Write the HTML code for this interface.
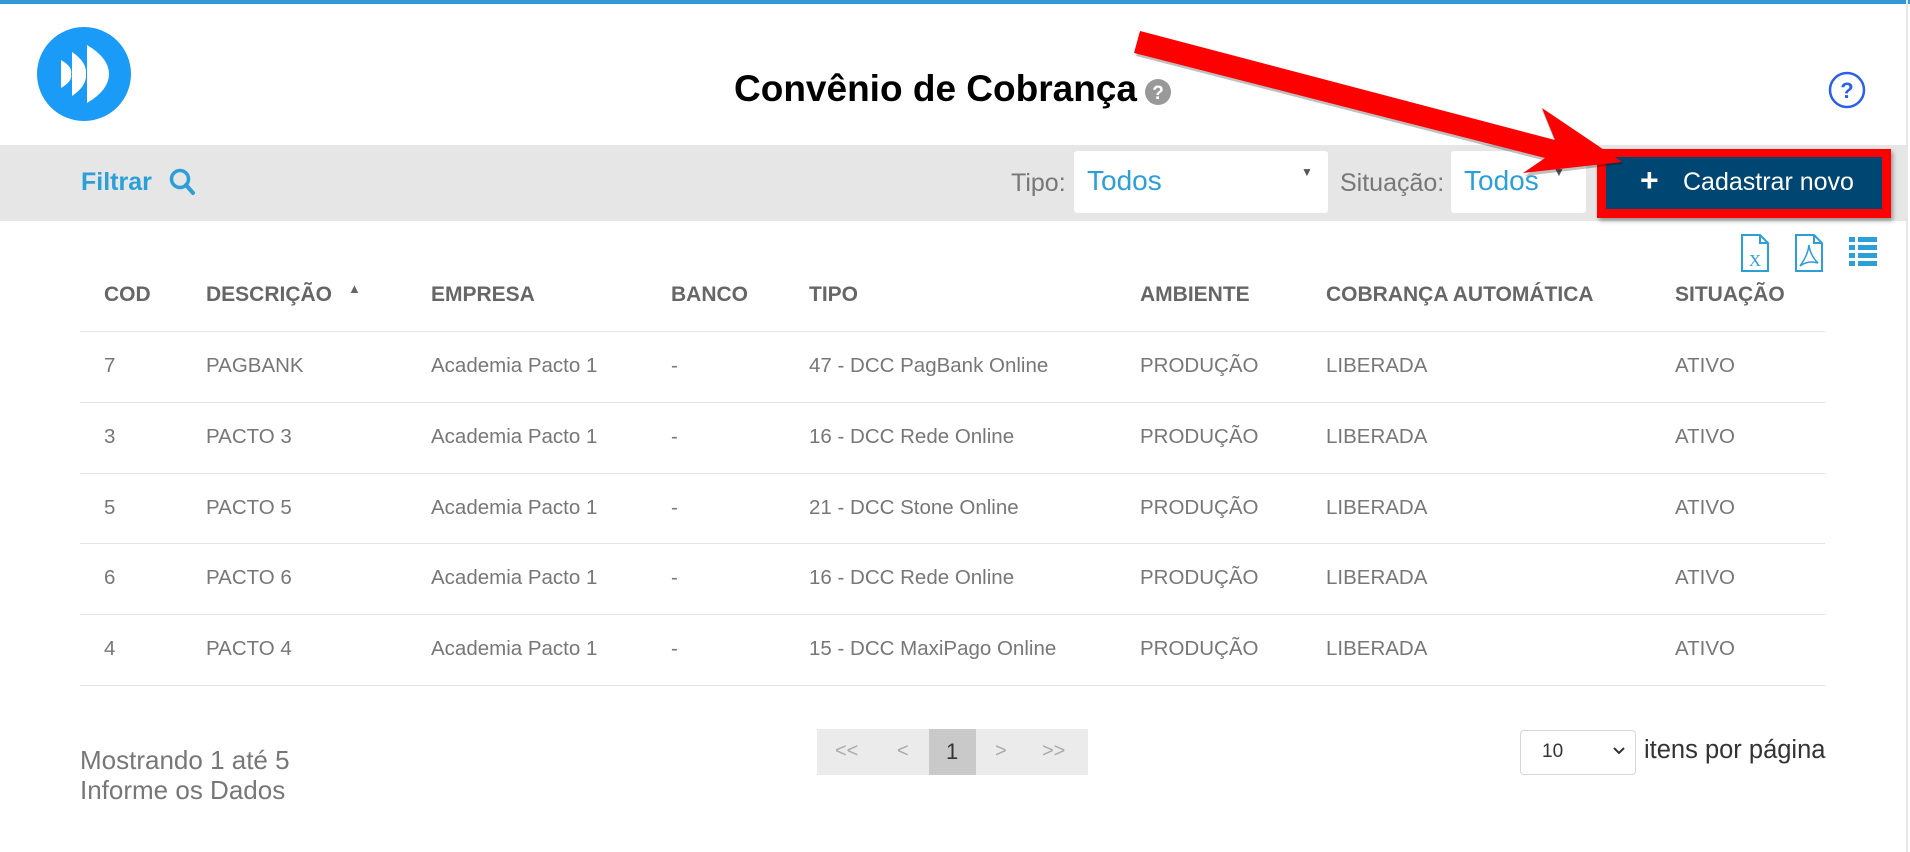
<!DOCTYPE html>
<html><head><meta charset="utf-8"><style>
*{box-sizing:border-box;margin:0;padding:0}
body{width:1910px;height:852px;overflow:hidden;background:#fff;font-family:"Liberation Sans",sans-serif;position:relative;color:#777}
.a{position:absolute;white-space:nowrap}
.th{position:absolute;top:283px;font-weight:bold;font-size:21px;color:#666;white-space:nowrap}
.td{position:absolute;font-size:20.5px;color:#777;white-space:nowrap}
.ln{position:absolute;left:80px;width:1745px;height:1px;background:#e2e6e8}
.r{position:absolute;left:0;width:1910px;height:30px}
</style></head><body>
<div class="a" style="left:0;top:0;width:1910px;height:4px;background:#3399d6"></div>
<div class="a" style="left:1906px;top:0;width:2px;height:852px;background:#e6e6e6"></div>
<svg class="a" style="left:0;top:0" width="140" height="140" viewBox="0 0 140 140">
<circle cx="84" cy="74" r="47" fill="#1a9bf8"/>
<path d="M61 60 Q73 67 71 74 Q73 81 61 88Z" fill="#fff"/>
<path d="M72 52 Q87 62 86 74 Q87 86 72 96Z" fill="#fff"/>
<path d="M87 45 Q109 58 109 74 Q109 90 87 103Z" fill="#fff"/>
</svg>
<div class="a" style="left:734px;top:68px;font-size:37px;font-weight:bold;color:#000">Convênio de Cobrança</div>
<svg class="a" style="left:1145px;top:79px" width="26" height="26" viewBox="0 0 26 26"><circle cx="13" cy="13" r="13" fill="#999"/><text x="13" y="20" text-anchor="middle" font-family="Liberation Sans" font-weight="bold" font-size="19" fill="#fff">?</text></svg>
<svg class="a" style="left:1828px;top:71px" width="38" height="38" viewBox="0 0 38 38"><circle cx="19" cy="19" r="17" fill="none" stroke="#2a5fe8" stroke-width="2.5"/><text x="19" y="27" text-anchor="middle" font-family="Liberation Sans" font-weight="bold" font-size="22" fill="#2a5fe8">?</text></svg>
<div class="a" style="left:0;top:145px;width:1906px;height:76px;background:#e6e6e6"></div>
<div class="a" style="left:81px;top:168px;font-size:25px;font-weight:bold;color:#2c9fd9">Filtrar</div>
<svg class="a" style="left:168px;top:167px" width="30" height="30" viewBox="0 0 30 30"><circle cx="12" cy="12" r="8.5" fill="none" stroke="#2c9fd9" stroke-width="3.5"/><path d="M18 18 L25 26" stroke="#2c9fd9" stroke-width="4" stroke-linecap="round"/></svg>
<div class="a" style="left:1011px;top:169px;font-size:25px;color:#777">Tipo:</div>
<div class="a" style="left:1074px;top:151px;width:254px;height:62px;background:#fff;border-radius:3px"></div>
<div class="a" style="left:1087px;top:165px;font-size:28px;color:#2c9fd9">Todos</div>
<div class="a" style="left:1301px;top:165px;font-size:12px;color:#555">▼</div>
<div class="a" style="left:1340px;top:169px;font-size:25px;color:#777">Situação:</div>
<div class="a" style="left:1451px;top:151px;width:135px;height:62px;background:#fff;border-radius:3px"></div>
<div class="a" style="left:1464px;top:165px;font-size:28px;color:#2c9fd9">Todos</div>
<div class="a" style="left:1553px;top:165px;font-size:12px;color:#555">▼</div>
<div class="a" style="left:1597px;top:149px;width:294px;height:69px;background:#ff0000;box-shadow:2px 3px 4px rgba(0,0,0,.35)"></div>
<div class="a" style="left:1606px;top:157px;width:276px;height:52px;background:#004672"></div>
<div class="a" style="left:1640px;top:164px;font-size:32px;font-weight:bold;color:#fff;line-height:32px">+</div>
<div class="a" style="left:1683px;top:168px;font-size:25px;color:#fff">Cadastrar novo</div>
<svg class="a" style="left:0;top:0" width="1910" height="230" viewBox="0 0 1910 230">
<polygon points="1142,34 1555,142 1542,110 1624,164 1525,176 1546,161 1136,56" fill="#000" opacity=".25"/>
<polygon points="1140,31 1555,140 1542,108 1622,162 1523,173 1545,158 1134,53" fill="#f00"/>
</svg>
<svg class="a" style="left:1740px;top:233px" width="140" height="40" viewBox="0 0 140 40">
<path d="M2 2 H20 L28 10 V38 H2Z M20 2 V10 H28" fill="none" stroke="#2c9fd9" stroke-width="2"/>
<text x="15" y="33" text-anchor="middle" font-family="Liberation Serif" font-size="17" fill="#2c9fd9">X</text>
<path d="M56 2 H74 L82 10 V38 H56Z M74 2 V10 H82" fill="none" stroke="#2c9fd9" stroke-width="2"/>
<path d="M60 33 Q68 22 69 12 Q70 22 78 30 Q68 27 60 33Z" fill="none" stroke="#2c9fd9" stroke-width="1.5"/>
<rect x="109" y="4" width="6" height="5" fill="#2c9fd9"/><rect x="118" y="4" width="19" height="5" fill="#2c9fd9"/>
<rect x="109" y="12" width="6" height="5" fill="#2c9fd9"/><rect x="118" y="12" width="19" height="5" fill="#2c9fd9"/>
<rect x="109" y="20" width="6" height="5" fill="#2c9fd9"/><rect x="118" y="20" width="19" height="5" fill="#2c9fd9"/>
<rect x="109" y="28" width="6" height="5" fill="#2c9fd9"/><rect x="118" y="28" width="19" height="5" fill="#2c9fd9"/>
</svg>
<div class="th" style="left:104px">COD</div>
<div class="th" style="left:206px">DESCRIÇÃO</div>
<div class="a" style="left:348px;top:281px;font-size:13px;color:#666">▲</div>
<div class="th" style="left:431px">EMPRESA</div>
<div class="th" style="left:671px">BANCO</div>
<div class="th" style="left:809px">TIPO</div>
<div class="th" style="left:1140px">AMBIENTE</div>
<div class="th" style="left:1326px">COBRANÇA AUTOMÁTICA</div>
<div class="th" style="left:1675px">SITUAÇÃO</div>
<div class="ln" style="top:331px"></div>
<div class="ln" style="top:402px"></div>
<div class="ln" style="top:473px"></div>
<div class="ln" style="top:543px"></div>
<div class="ln" style="top:614px"></div>
<div class="ln" style="top:685px"></div>
<div class="r" style="top:354px">
<div class="td" style="left:104px">7</div><div class="td" style="left:206px">PAGBANK</div><div class="td" style="left:431px">Academia Pacto 1</div><div class="td" style="left:671px">-</div><div class="td" style="left:809px">47 - DCC PagBank Online</div><div class="td" style="left:1140px">PRODUÇÃO</div><div class="td" style="left:1326px">LIBERADA</div><div class="td" style="left:1675px">ATIVO</div>
</div>
<div class="r" style="top:425px">
<div class="td" style="left:104px">3</div><div class="td" style="left:206px">PACTO 3</div><div class="td" style="left:431px">Academia Pacto 1</div><div class="td" style="left:671px">-</div><div class="td" style="left:809px">16 - DCC Rede Online</div><div class="td" style="left:1140px">PRODUÇÃO</div><div class="td" style="left:1326px">LIBERADA</div><div class="td" style="left:1675px">ATIVO</div>
</div>
<div class="r" style="top:496px">
<div class="td" style="left:104px">5</div><div class="td" style="left:206px">PACTO 5</div><div class="td" style="left:431px">Academia Pacto 1</div><div class="td" style="left:671px">-</div><div class="td" style="left:809px">21 - DCC Stone Online</div><div class="td" style="left:1140px">PRODUÇÃO</div><div class="td" style="left:1326px">LIBERADA</div><div class="td" style="left:1675px">ATIVO</div>
</div>
<div class="r" style="top:566px">
<div class="td" style="left:104px">6</div><div class="td" style="left:206px">PACTO 6</div><div class="td" style="left:431px">Academia Pacto 1</div><div class="td" style="left:671px">-</div><div class="td" style="left:809px">16 - DCC Rede Online</div><div class="td" style="left:1140px">PRODUÇÃO</div><div class="td" style="left:1326px">LIBERADA</div><div class="td" style="left:1675px">ATIVO</div>
</div>
<div class="r" style="top:637px">
<div class="td" style="left:104px">4</div><div class="td" style="left:206px">PACTO 4</div><div class="td" style="left:431px">Academia Pacto 1</div><div class="td" style="left:671px">-</div><div class="td" style="left:809px">15 - DCC MaxiPago Online</div><div class="td" style="left:1140px">PRODUÇÃO</div><div class="td" style="left:1326px">LIBERADA</div><div class="td" style="left:1675px">ATIVO</div>
</div>
<div class="a" style="left:80px;top:745px;font-size:26px;color:#777">Mostrando 1 até 5</div>
<div class="a" style="left:80px;top:775px;font-size:26px;color:#777">Informe os Dados</div>
<div class="a" style="left:817px;top:729px;width:271px;height:46px;background:#ebebeb"></div>
<div class="a" style="left:929px;top:729px;width:47px;height:46px;background:#c9c9c9"></div>
<div class="a" style="left:835px;top:740px;font-size:20px;color:#aaa">&lt;&lt;</div>
<div class="a" style="left:897px;top:740px;font-size:20px;color:#aaa">&lt;</div>
<div class="a" style="left:946px;top:739px;font-size:22px;color:#333">1</div>
<div class="a" style="left:995px;top:740px;font-size:20px;color:#aaa">&gt;</div>
<div class="a" style="left:1042px;top:740px;font-size:20px;color:#aaa">&gt;&gt;</div>
<div class="a" style="left:1520px;top:730px;width:116px;height:45px;border:1px solid #d6d6d6;border-radius:4px;background:#fff"></div>
<div class="a" style="left:1542px;top:741px;font-size:19px;color:#333">10</div>
<svg class="a" style="left:1612px;top:746px" width="14" height="10" viewBox="0 0 14 10"><path d="M2 2 L7 7 L12 2" fill="none" stroke="#333" stroke-width="2"/></svg>
<div class="a" style="left:1644px;top:736px;font-size:25.5px;color:#333">itens por página</div>
</body></html>
